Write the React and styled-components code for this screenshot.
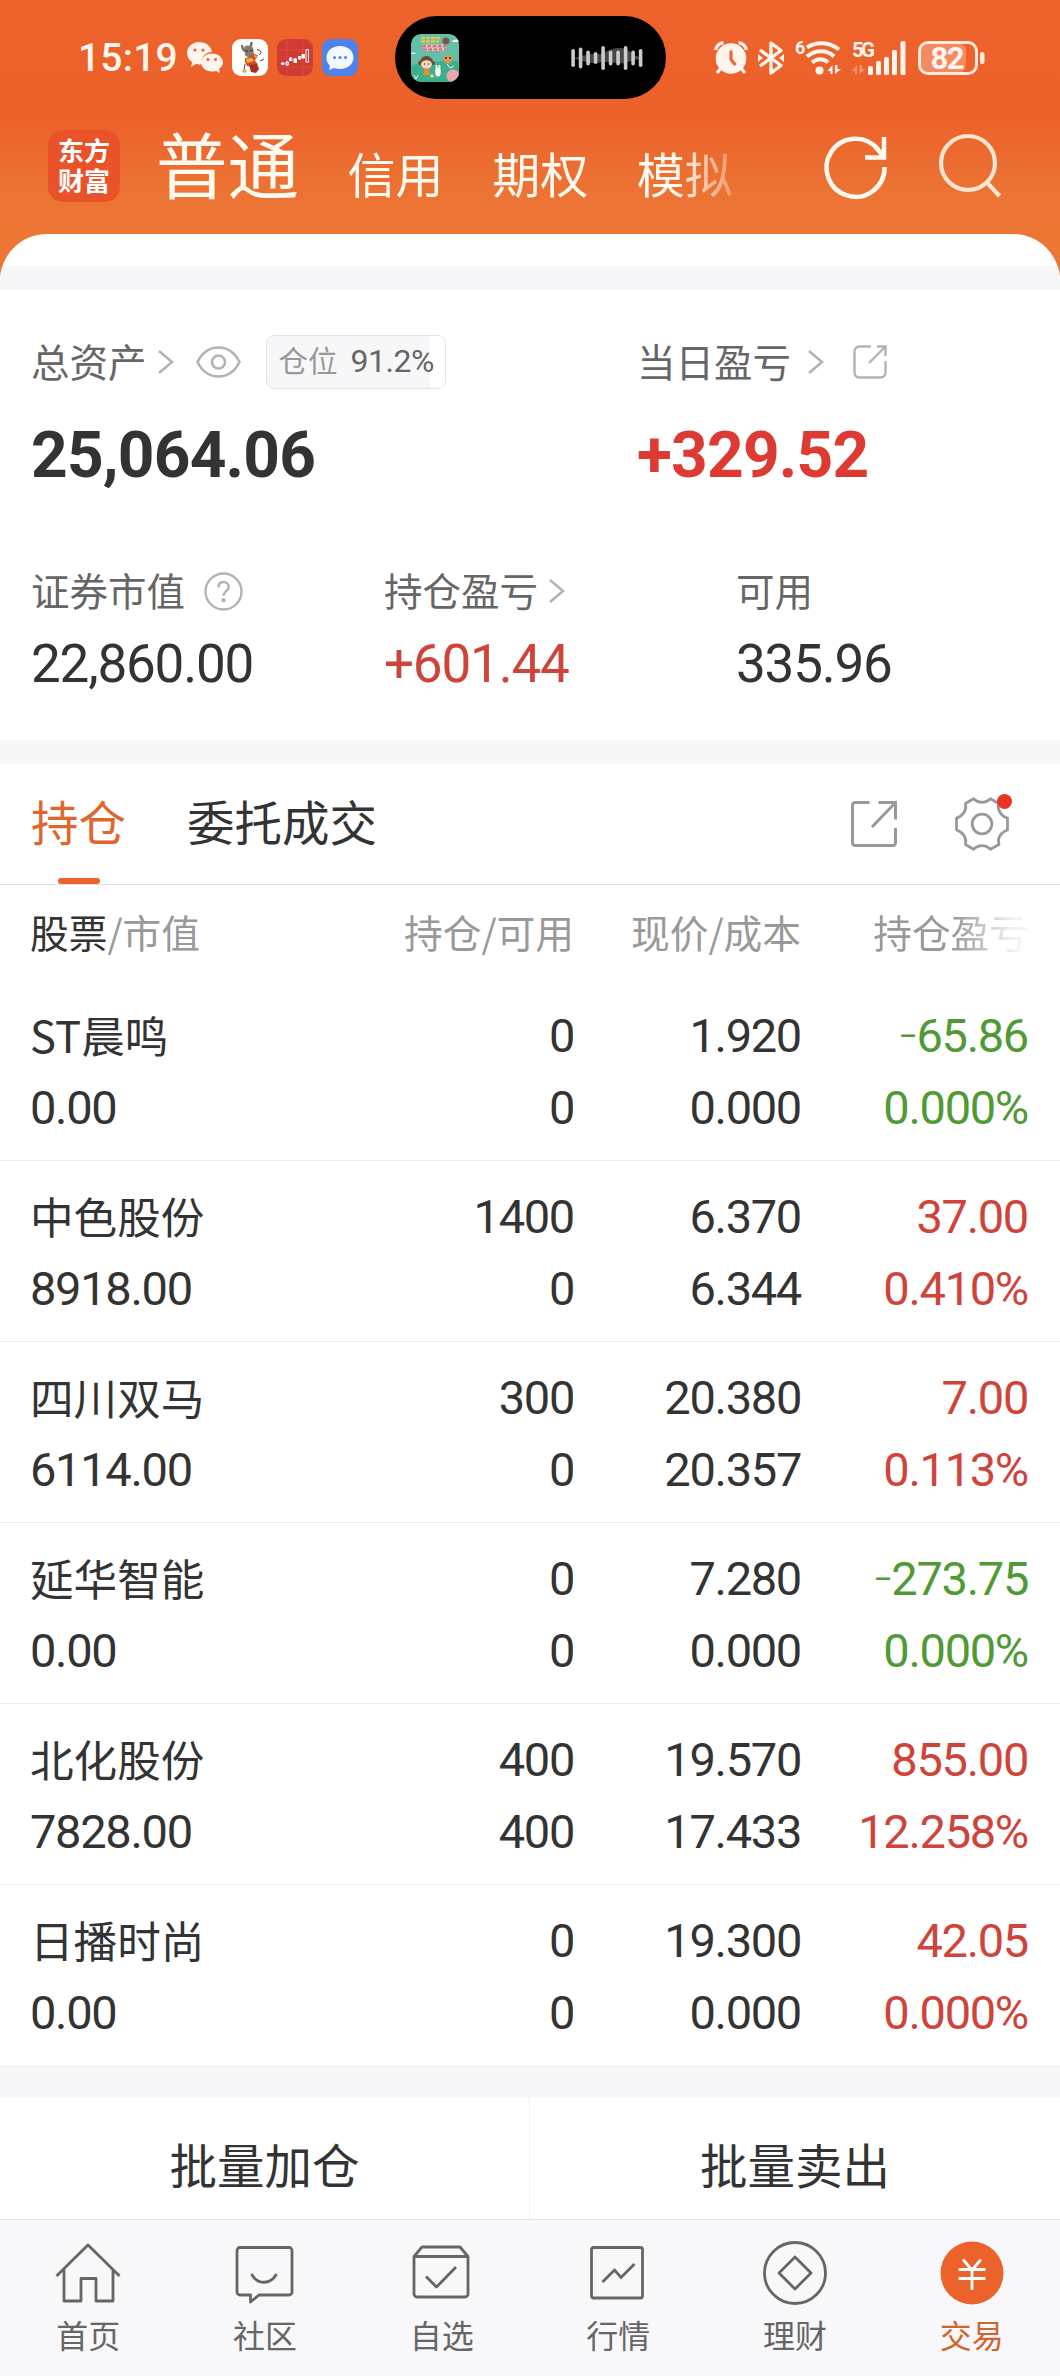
import React from "react";
import styled, { createGlobalStyle, css } from "styled-components";

const ORANGE = "#ec622b";
const RED = "#cf443a";
const GREEN = "#4f9a35";

const GlobalStyle = createGlobalStyle`
  * {
    box-sizing: border-box;
  }
  body {
    margin: 0;
    background: #fff;
    color: #333;
    font-family: "Noto Sans CJK SC", sans-serif;
    -webkit-font-smoothing: antialiased;
  }
  svg {
    display: block;
    flex: none;
    overflow: visible;
  }
`;

const Page = styled.div`
  width: 1060px;
  height: 2376px;
  display: flex;
  flex-direction: column;
  overflow: hidden;
  background: linear-gradient(#ee622b 0, #ec612a 115px, #ec7334 190px, #ec7834 290px);
`;

const numeric = css`
  font-family: Roboto, "Noto Sans CJK SC", sans-serif;
  font-weight: 400;
`;

/* ---------- top ---------- */

const StatusBar = styled.div`
  height: 115px;
  padding: 16px 0 0 78px;
  display: flex;
  flex: none;
`;

const StatusGroup = styled.div`
  display: flex;
  align-items: center;
  height: 83px;
  gap: ${(p) => p.$gap || 0}px;
  margin-left: ${(p) => p.$left || 0}px;
`;

const Clock = styled.span`
  width: 100px;
  font: 500 39px/44px Roboto, sans-serif;
  color: #fff5ee;
  letter-spacing: 0.2px;
  white-space: nowrap;
`;

const Island = styled.div`
  width: 271px;
  height: 83px;
  margin-left: 37px;
  padding: 0 23px 0 16px;
  border-radius: 42px;
  background: #000;
  display: flex;
  align-items: center;
  justify-content: space-between;
`;

const NavBar = styled.header`
  height: 119px;
  flex: none;
  display: flex;
  padding-left: 48px;
  color: #fffaf0;
`;

const Logo = styled.div`
  width: 72px;
  height: 72px;
  margin-top: 15px;
  padding: 5px 8px 0 10px;
  border-radius: 15px;
  background: #ea532a;
  color: #fff;
  font-size: 26px;
  font-weight: 700;
  line-height: 30px;
`;

const AccountTabs = styled.nav`
  display: flex;
  align-items: baseline;
  width: 610px;
  margin-left: 36px;
  white-space: nowrap;
  mask-image: linear-gradient(90deg, #000 520px, rgba(0, 0, 0, 0.2) 585px);
`;

const AccountTab = styled.span`
  font-size: ${(p) => (p.$active ? 71.5 : 48)}px;
  line-height: 94px;
  margin-right: 48.6px;
`;

const HeaderIcons = styled.div`
  display: flex;
  gap: 51px;
  margin: 20px 0 0 59px;
`;

/* ---------- summary ---------- */

const Sheet = styled.main`
  flex: none;
  height: 1985px;
  border-radius: 47px 47px 0 0;
  background: #fff;
  overflow: hidden;
`;

const Band = styled.div`
  height: ${(p) => p.$h || 24}px;
  margin-top: ${(p) => p.$top || 0}px;
  background: #f7f7fa;
  ${(p) => p.$line && css`border-top: 1px solid #ebebed;`}
`;

const Summary = styled.section`
  height: 450px;
  padding: 45px 0 0 31px;
`;

const Columns = styled.div`
  display: grid;
  grid-template-columns: ${(p) => p.$cols};
  margin-top: ${(p) => p.$top || 0}px;
`;

const Label = styled.div`
  display: flex;
  align-items: center;
  height: 54px;
  font-size: 38.5px;
  color: #666;
  span {
    position: relative;
    top: -2px;
  }
  span + svg {
    margin-left: ${(p) => p.$gap || 11}px;
  }
  svg + svg {
    margin-left: ${(p) => p.$far || 24}px;
  }
`;

const BigNumber = styled.div`
  ${numeric}
  margin-top: 29px;
  line-height: 76px;
  font-size: 64px;
  font-weight: 700;
  letter-spacing: -0.8px;
  color: ${(p) => (p.$up ? "#dd3a33" : "#333")};
`;

const Value = styled.div`
  ${numeric}
  margin-top: 16px;
  line-height: 60px;
  font-size: 53px;
  letter-spacing: -1.2px;
  color: ${(p) => (p.$up ? RED : "#333")};
`;

const Ratio = styled.div`
  width: 180px;
  height: 54px;
  margin-left: 25px;
  padding-left: 12px;
  border: 1px solid #e5e5e5;
  border-radius: 8px;
  background: linear-gradient(90deg, #f7f7fa 163px, #fff 163px);
  font-size: 29.5px;
  line-height: 47px;
  color: #999;
  white-space: nowrap;
  b {
    ${numeric}
    margin-left: 13px;
    font-size: 32px;
    letter-spacing: -0.5px;
    color: #666;
  }
`;

/* ---------- holdings ---------- */

const Tabs = styled.div`
  height: 121px;
  padding: 0 51px 0 31px;
  display: flex;
  border-bottom: 1px solid #dedede;
`;

const Tab = styled.div`
  display: flex;
  flex-direction: column;
  align-items: center;
  justify-content: space-between;
  margin-right: 61px;
  font-size: 47.5px;
  line-height: 114px;
  color: ${(p) => (p.$active ? "#e0662f" : "#333")};
  &::after {
    content: "";
    width: 42px;
    height: 6px;
    border-radius: 3px;
    background: ${(p) => (p.$active ? ORANGE : "transparent")};
  }
`;

const Tools = styled.div`
  margin-left: auto;
  display: flex;
  align-items: center;
  gap: 58px;
`;

const Grid = styled.div`
  display: grid;
  grid-template-columns: 244px 300px 227px 227px;
  padding-left: 30px;
  > * {
    text-align: right;
    white-space: nowrap;
  }
  > :first-child {
    text-align: left;
  }
`;

const TableHead = styled(Grid)`
  height: 95px;
  line-height: 92px;
  font-size: 38.7px;
  color: #999;
  b {
    font-weight: 400;
    color: #333;
  }
  > :last-child {
    mask-image: linear-gradient(90deg, #000 153px, rgba(0, 0, 0, 0.12) 212px);
  }
`;

const Holding = styled(Grid)`
  height: 181px;
  padding-top: 20px;
  border-bottom: 1px solid #ededed;
  &:last-of-type {
    border-bottom: 0;
  }
`;

const Cell = styled.div`
  ${numeric}
  font-size: 47px;
  line-height: 72px;
  letter-spacing: -1.3px;
  color: ${(p) => p.$color || "#333"};
`;

const Sign = styled.span`
  font-size: 34px;
  line-height: 1;
  vertical-align: 4px;
`;

const Name = styled.div`
  margin-bottom: 4px;
  font-family: "Noto Sans CJK SC", sans-serif;
  font-size: 43.6px;
  line-height: 68px;
  letter-spacing: 0;
`;

/* ---------- bottom ---------- */

const Actions = styled.div`
  height: 122px;
  display: grid;
  grid-template-columns: 529px 531px;
  background: #fff;
`;

const Action = styled.div`
  font-size: 47.5px;
  line-height: 133px;
  text-align: center;
  & + & {
    border-left: 1px solid #f2f2f2;
  }
`;

const TabBar = styled.footer`
  height: 157px;
  flex: none;
  padding: 21px 0 0;
  border-top: 1px solid #e2e2e4;
  background: #f8f8fa;
  display: grid;
  grid-template-columns: repeat(6, 1fr);
`;

const TabBarItem = styled.div`
  display: flex;
  flex-direction: column;
  align-items: center;
  font-size: 32px;
  line-height: 58px;
  color: ${(p) => (p.$active ? "#d0642f" : "#666")};
`;

/* ---------- icons ---------- */

const Chevron = () => (
  <svg width="16" height="24" viewBox="0 0 16 24" fill="none" stroke="#b3b3b3" strokeWidth="2.6">
    <path d="M1 1 14 12 1 23" />
  </svg>
);

const Eye = () => (
  <svg width="45" height="32" viewBox="0 0 45 32" fill="none" stroke="#b3b3b3" strokeWidth="2.6">
    <path d="M1.500 16C6 7 13 1.500 22.500 1.500S39 7 43.500 16C39 25 32 30.500 22.500 30.500S6 25 1.500 16Z" />
    <circle cx="22.500" cy="16" r="6.500" />
  </svg>
);

const Help = () => (
  <svg width="39" height="39" viewBox="0 0 39 39" fill="none" stroke="#b3b3b3" strokeWidth="2.4">
    <circle cx="19.500" cy="19.500" r="18" />
    <path d="M14.500 15.500c0-3.500 2-5.500 5-5.500s5.200 2 5.200 5c0 4-5.200 4.500-5.200 8.800" />
    <circle cx="19.500" cy="28.200" r="1" />
  </svg>
);

const ShareSmall = () => (
  <svg width="34" height="34" viewBox="0 0 34 34" fill="none" stroke="#b3b3b3" strokeWidth="2.4">
    <path d="M18 1.500H6.500a5 5 0 0 0-5 5v21a5 5 0 0 0 5 5h21a5 5 0 0 0 5-5V16" />
    <path d="M24 1.500h8.500V11M32 2 16 18" />
  </svg>
);

const ShareLarge = () => (
  <svg width="46" height="46" viewBox="0 0 46 46" fill="none" stroke="#999" strokeWidth="3">
    <path d="M18.500 1.500H4a2.500 2.500 0 0 0-2.500 2.500v38A2.500 2.500 0 0 0 4 44.500h38a2.500 2.500 0 0 0 2.500-2.500V27" />
    <path d="M27.500 1.500h17v17M44 2 21 26" />
  </svg>
);

const Gear = () => (
  <svg width="54" height="54" viewBox="0 0 54 54" fill="none" stroke="#999" strokeWidth="2.8" strokeLinejoin="round">
    <path d="M18.500 1.800C23.500 6.600 30.500 6.600 35.500 1.800L43.500 6.500C42 13 46 19 52.500 21V33C46 35 42 41 44 47.500L35.500 52.200C30.500 47.400 23.500 47.400 18.500 52.200L10.500 47.500C12 41 8 35 1.500 33V21C8 19 12 13 10.500 6.500Z" />
    <circle cx="27" cy="27" r="9.800" />
    <circle cx="49.500" cy="4.500" r="7.500" fill="#e93323" stroke="none" />
  </svg>
);

const Refresh = () => (
  <svg width="62" height="64" viewBox="0 0 62 64" fill="none" stroke="#fffaf0" strokeWidth="4.500">
    <path d="M59.500 32A29 29 0 1 1 53 14.500" />
    <path d="M59 2v20.500H40M50 11l9 11" />
  </svg>
);

const Search = () => (
  <svg width="64" height="64" viewBox="0 0 64 64" fill="none" stroke="#ffe6d2" strokeWidth="4.200">
    <circle cx="30" cy="28" r="27" />
    <path d="m48.500 47 13 14" />
  </svg>
);

const WeChat = () => (
  <svg width="36" height="31" viewBox="0 0 36 31">
    <g fill="#fff5ee">
      <path d="M12 0C5 0 0 5 0 11c0 4 2 7 5 9l-1 5 5-3c2 .5 4 .5 5 .2A11 11 0 0 1 25 10C24 4 19 0 12 0Z" />
      <path d="M25 11.500c-6 0-11 4-11 9s5 9 11 9c1.500 0 3-.2 4-.6l4 2-1-4c2-1.500 4-4 4-6.500 0-5-5-8.900-11-8.900Z" />
    </g>
    <g fill={ORANGE}>
      <circle cx="8" cy="8" r="1.600" />
      <circle cx="16" cy="8" r="1.600" />
      <circle cx="21" cy="17.500" r="1.500" />
      <circle cx="28.500" cy="17.500" r="1.500" />
    </g>
  </svg>
);

const OxApp = () => (
  <svg width="36" height="37" viewBox="0 0 36 37">
    <rect width="36" height="37" rx="9" fill="#fff" />
    <path d="M10 6c0 3 1 5 3 6M19.500 3c0 4-1 6-3 8" stroke="#666" strokeWidth="2.200" fill="none" />
    <path d="M12 8c3-2 7-2 9 1l1 6c-2 4-7 4-9 1z" fill="#8a7c6c" />
    <path d="M13 11.500l3 1M18 12l3-1" stroke="#3c332c" strokeWidth="1.300" />
    <path d="M13 19c3 0 6-2 9-4l4 1c-1 3-3 4-3 6l3 3-3 3-8-1-2-4z" fill="#d24a28" />
    <path d="M14 20l6-1 2 3-7 2zM22 16l4 1-3 2z" fill="#f0b92d" />
    <path d="M17 26l8-1 2 5-3 4-5-1z" fill="#a92e22" />
    <path d="M27 16c4-3 1-6-2-5M13 25l-1 6M28 22l4-2" stroke="#4b4038" fill="none" />
    <circle cx="12.500" cy="32" r="2" fill="#dfb242" />
  </svg>
);

const StockApp = () => (
  <svg width="36" height="37" viewBox="0 0 36 37" stroke="#fff">
    <rect width="36" height="37" rx="9" fill="#d23a34" stroke="none" />
    <path d="M0 11h36M0 28h36M10 0v37M26 0v37" stroke="#e0564d" strokeWidth="0.600" />
    <path d="M6 23v3M10 22v5M13.500 18v4M18 19v5M22.500 17v4M26 15v4" strokeWidth="1" />
    <path d="M4.500 24h2.500v1.500H4.500zM17 20h2.500v3.500H17zM25 15.500h2.500v3.500H25z" fill="#fff" />
    <path d="M9 23h2.500v3H9zM12.500 19h2.500v2.500h-2.500zM21.500 17.500H24V20h-2.500zM29 10.500h2.500V23H29z" fill="none" />
  </svg>
);

const MessageApp = () => (
  <svg width="36" height="37" viewBox="0 0 36 37">
    <rect width="36" height="37" rx="9" fill="#4f83ec" />
    <path d="M18 7c-8 0-13.500 5-13.500 11.500 0 3.500 1 6 3.500 8.500l-1 4 5-2c2 .7 4 1 6 1 8 0 13.500-5 13.500-11.500S26 7 18 7Z" fill="#f4f8ff" />
    <g fill="#4f83ec">
      <circle cx="12.500" cy="18.500" r="1.500" />
      <circle cx="18" cy="18.500" r="1.500" />
      <circle cx="23.500" cy="18.500" r="1.500" />
    </g>
  </svg>
);

const StoryCover = () => (
  <svg width="48" height="48" viewBox="0 0 48 48">
    <defs>
      <clipPath id="cover">
        <rect width="48" height="48" rx="10" />
      </clipPath>
    </defs>
    <g clipPath="url(#cover)">
      <rect width="48" height="48" fill="#63bfa9" />
      <path d="M0 32c8-4 14 0 22-3s18-4 26-1v20H0z" fill="#3fae8c" />
      <path d="M0 20c2-3 5-1 5 0zM41 8c1-3 4-3 7-2v2z" fill="#eefaf6" />
      <path d="M10 4h20M10 7.500h18" stroke="#eac64c" strokeWidth="2.600" strokeDasharray="4 1" />
      <path d="M11 12h25M12 15.500h22" stroke="#f3dfd8" strokeWidth="3.200" />
      <path d="M11 12h25M12 15.500h22" stroke="#df6f78" strokeWidth="2.400" strokeDasharray="4 1.200" />
      <circle cx="35" cy="7" r="3.500" fill="#7c5543" />
      <circle cx="9" cy="29" r="2" fill="#6e4a35" />
      <circle cx="22" cy="29" r="2" fill="#6e4a35" />
      <circle cx="15.500" cy="28.500" r="6.500" fill="#6e4a35" />
      <ellipse cx="15.500" cy="30.500" rx="5.500" ry="4.200" fill="#fbd6bb" />
      <circle cx="13.500" cy="30" r="0.700" fill="#4b3427" />
      <circle cx="17.500" cy="30" r="0.700" fill="#4b3427" />
      <path d="M13 35h5l1 6h-7z" fill="#dd9131" />
      <path d="M25.500 31v5M28.500 31v5" stroke="#fff" strokeWidth="1.700" />
      <ellipse cx="27" cy="38" rx="2.800" ry="4.500" fill="#f5f8ee" />
      <circle cx="37" cy="25" r="4.500" fill="#dc9a4e" />
      <circle cx="35" cy="24" r="1" fill="#4b3427" />
      <circle cx="39" cy="24" r="1" fill="#4b3427" />
      <circle cx="42" cy="42" r="6.500" fill="#eea5ae" />
      <circle cx="21" cy="42" r="1.800" fill="#f2dc63" />
      <path d="M3 41l2 4 2-4M36 30l3 4 4-2" stroke="#e6f5d8" fill="none" />
    </g>
  </svg>
);

const BARS = [18, 21, 15, 12, 24, 15, 15, 24, 15, 18];

const Waveform = () => (
  <svg width="72" height="24" viewBox="0 0 72 24">
    <path d="M4 12c8-2 14-5 22-4 8 1 12-7 23-6 9 0 12 8 20 9v2c-10 1-15 6-24 4-12-2-16 0-24 0-8 0-10-4-17-4z" fill="#464646" />
    {BARS.map((h, i) => (
      <rect key={i} x={i * 7.5 + 0.3} y={12 - h / 2} width="3.600" height={h} rx="1.800" fill="#cbcbcd" />
    ))}
  </svg>
);

const Alarm = () => (
  <svg width="34" height="33" viewBox="0 0 34 33" stroke="#fff5ee" fill="none">
    <path d="M1.500 9A9 9 0 0 1 9.500 1.800M32.500 9a9 9 0 0 0-8-7.200M7 27l-4 5M27 27l4 5" strokeWidth="3.400" />
    <circle cx="17" cy="17.500" r="15.300" fill="#fff5ee" stroke="none" />
    <path d="M17 9.500v9l4.500 5.500" stroke={ORANGE} strokeWidth="3" />
  </svg>
);

const Bluetooth = () => (
  <svg width="26" height="34" viewBox="0 0 26 34" stroke="#fff5ee" strokeWidth="3.400" fill="none" strokeLinejoin="round">
    <path d="M2 9 23 24.500 13 32V2l10 7.500L2 25" />
    <path d="M0 13v8l5-4zM26 13v8l-5-4z" fill="#fff5ee" stroke="none" />
  </svg>
);

const StatusText = styled.text`
  font-family: Roboto, sans-serif;
  font-weight: 700;
  fill: #fff5ee;
`;

const Wifi = () => (
  <svg width="46" height="34" viewBox="0 0 46 34" stroke="#fff5ee" strokeWidth="4" fill="none">
    <StatusText x="0" y="13" fontSize="18" stroke="none">6</StatusText>
    <path d="M12 6.500C21 .5 34 .5 44 8.500M12 15.500c8-7 20-7 27 0M17 21.500c5-4.500 12-4.500 16 0" />
    <circle cx="24.500" cy="29.500" r="4" fill="#fff5ee" stroke="none" />
    <path d="M37.500 24v9h-2v-3h-3zM40 24v9l6-5h-3.500v-4z" fill="#fff5ee" stroke="none" />
  </svg>
);

const Signal = () => (
  <svg width="56" height="34" viewBox="0 0 56 34" fill="#fff5ee">
    <StatusText x="1" y="16" fontSize="20.500" textLength="23">5G</StatusText>
    <path d="M6 24v9H4v-3H1zM8.500 24v9l6-5h-3.500v-4z" opacity="0.350" />
    <rect x="17" y="25" width="5" height="9" rx="1.500" />
    <rect x="25" y="20" width="5" height="14" rx="1.500" />
    <rect x="33" y="16" width="5" height="18" rx="1.500" />
    <rect x="41" y="9" width="5" height="25" rx="1.500" />
    <rect x="49.500" y="0" width="5" height="34" rx="1.500" />
  </svg>
);

const Battery = () => (
  <svg width="68" height="34" viewBox="0 0 68 34">
    <rect x="3" y="3" width="45" height="28" rx="6" fill="#f38a62" />
    <rect x="1.500" y="1.500" width="57" height="31" rx="8.500" fill="none" stroke="#ffe9dc" strokeWidth="3" />
    <rect x="62" y="11" width="4.500" height="12" rx="2" fill="#ffe9dc" />
    <StatusText x="12.500" y="28" fontSize="31" textLength="34">82</StatusText>
  </svg>
);

const NavIcon = (props) => (
  <svg width="64" height="64" viewBox="0 0 64 64" fill="none" stroke="#666" strokeWidth="2.800" {...props} />
);

const Home = () => (
  <NavIcon strokeLinejoin="round">
    <path d="M.5 35 32 4l31.500 31M8 28v32h17V37.500h15V60h17V28" />
  </NavIcon>
);

const Community = () => (
  <NavIcon strokeLinejoin="round">
    <path d="M6 6.500h50a3 3 0 0 1 3 3V51a3 3 0 0 1-3 3H26l-8.500 7V54H7a3 3 0 0 1-3-3V9.500a3 3 0 0 1 3-3Z" />
    <path d="M18.500 33c6 11 19 11 25 0" />
  </NavIcon>
);

const Favorites = () => (
  <NavIcon strokeLinejoin="round">
    <path d="M4 15.500 12 6h38l8 9.500V53a3 3 0 0 1-3 3H7a3 3 0 0 1-3-3ZM4 15.500h54" />
    <path d="M16 35.500 26.500 46 46 26" />
  </NavIcon>
);

const Market = () => (
  <NavIcon>
    <rect x="5.500" y="6.500" width="51" height="50.500" rx="2" />
    <path d="M16.500 41 28.500 29l6.500 7.500L48.500 23" />
  </NavIcon>
);

const Wealth = () => (
  <NavIcon strokeLinejoin="round">
    <circle cx="32" cy="32" r="30.500" />
    <path d="M32 16 48 32 32 48 16 32Z" />
  </NavIcon>
);

const Trade = () => (
  <NavIcon stroke="#fff">
    <circle cx="32" cy="32" r="31.500" fill={ORANGE} stroke="none" />
    <path d="M23 18.500 32 29l9-10.500M18.500 28.500h27M18.500 37.500h27M32 29v20" />
  </NavIcon>
);

/* ---------- data ---------- */

const holdings = [
  { name: "ST晨鸣", value: "0.00", held: "0", free: "0", price: "1.920", cost: "0.000", profit: "65.86", rate: "0.000%", down: true },
  { name: "中色股份", value: "8918.00", held: "1400", free: "0", price: "6.370", cost: "6.344", profit: "37.00", rate: "0.410%" },
  { name: "四川双马", value: "6114.00", held: "300", free: "0", price: "20.380", cost: "20.357", profit: "7.00", rate: "0.113%" },
  { name: "延华智能", value: "0.00", held: "0", free: "0", price: "7.280", cost: "0.000", profit: "273.75", rate: "0.000%", down: true },
  { name: "北化股份", value: "7828.00", held: "400", free: "400", price: "19.570", cost: "17.433", profit: "855.00", rate: "12.258%" },
  { name: "日播时尚", value: "0.00", held: "0", free: "0", price: "19.300", cost: "0.000", profit: "42.05", rate: "0.000%" },
];

const tabs = [
  { label: "首页", icon: <Home /> },
  { label: "社区", icon: <Community /> },
  { label: "自选", icon: <Favorites /> },
  { label: "行情", icon: <Market /> },
  { label: "理财", icon: <Wealth /> },
  { label: "交易", icon: <Trade />, active: true },
];

function App() {
  return (
    <>
      <GlobalStyle />
      <Page>
        <StatusBar>
          <StatusGroup $gap={9}>
            <Clock>15:19</Clock>
            <WeChat />
            <OxApp />
            <StockApp />
            <MessageApp />
          </StatusGroup>
          <Island>
            <StoryCover />
            <Waveform />
          </Island>
          <StatusGroup $left={48} $gap={10.4}>
            <Alarm />
            <Bluetooth />
            <Wifi />
            <Signal />
            <Battery />
          </StatusGroup>
        </StatusBar>

        <NavBar>
          <Logo>东方财富</Logo>
          <AccountTabs>
            <AccountTab $active>普通</AccountTab>
            <AccountTab>信用</AccountTab>
            <AccountTab>期权</AccountTab>
            <AccountTab>模拟</AccountTab>
          </AccountTabs>
          <HeaderIcons>
            <Refresh />
            <Search />
          </HeaderIcons>
        </NavBar>

        <Sheet>
          <Band $top={32} />
          <Summary>
            <Columns $cols="606px 1fr">
              <div>
                <Label $far={22}>
                  <span>总资产</span>
                  <Chevron />
                  <Eye />
                  <Ratio>
                    仓位<b>91.2%</b>
                  </Ratio>
                </Label>
                <BigNumber>25,064.06</BigNumber>
              </div>
              <div>
                <Label $gap={17} $far={29}>
                  <span>当日盈亏</span>
                  <Chevron />
                  <ShareSmall />
                </Label>
                <BigNumber $up>+329.52</BigNumber>
              </div>
            </Columns>
            <Columns $cols="353px 352px 1fr" $top={70}>
              <div>
                <Label $gap={19}>
                  <span>证券市值</span>
                  <Help />
                </Label>
                <Value>22,860.00</Value>
              </div>
              <div>
                <Label>
                  <span>持仓盈亏</span>
                  <Chevron />
                </Label>
                <Value $up>+601.44</Value>
              </div>
              <div>
                <Label>
                  <span>可用</span>
                </Label>
                <Value>335.96</Value>
              </div>
            </Columns>
          </Summary>
          <Band />

          <Tabs>
            <Tab $active>持仓</Tab>
            <Tab>委托成交</Tab>
            <Tools>
              <ShareLarge />
              <Gear />
            </Tools>
          </Tabs>
          <TableHead>
            <span>
              <b>股票</b>/市值
            </span>
            <span>持仓/可用</span>
            <span>现价/成本</span>
            <span>持仓盈亏</span>
          </TableHead>
          <section>
            {holdings.map((h) => (
              <Holding key={h.name}>
                <Cell>
                  <Name>{h.name}</Name>
                  {h.value}
                </Cell>
                <Cell>
                  {h.held}
                  <br />
                  {h.free}
                </Cell>
                <Cell>
                  {h.price}
                  <br />
                  {h.cost}
                </Cell>
                <Cell $color={h.down ? GREEN : RED}>
                  {h.down && <Sign>−</Sign>}
                  {h.profit}
                  <br />
                  {h.rate}
                </Cell>
              </Holding>
            ))}
          </section>
          <Band $h={31} $line />
          <Actions>
            <Action>批量加仓</Action>
            <Action>批量卖出</Action>
          </Actions>
        </Sheet>

        <TabBar>
          {tabs.map((t) => (
            <TabBarItem key={t.label} $active={t.active}>
              {t.icon}
              {t.label}
            </TabBarItem>
          ))}
        </TabBar>
      </Page>
    </>
  );
}

export default App;
